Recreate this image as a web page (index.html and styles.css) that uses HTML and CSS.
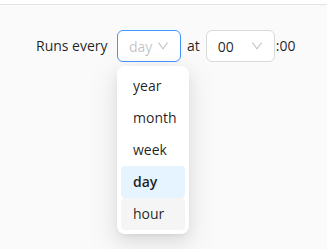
FILE: index.html
```html
<!DOCTYPE html>
<html>
<head>
  <title>Schedule</title>
  <link rel="stylesheet" href="styles.css">
</head>
<body>
  <div class="topbar"></div>
  <div class="schedule">
    <span class="label label-runs">Runs every</span>
    <div class="select-wrap">
      <div class="select select-focused">
        <span class="placeholder">day</span>
        <svg class="arrow" viewBox="64 64 896 896" width="12" height="12" fill="currentColor"><path d="M884 256h-75c-5.1 0-9.9 2.5-12.9 6.6L512 654.2 227.9 262.6c-3-4.1-7.8-6.6-12.9-6.6h-75c-6.5 0-10.3 7.4-6.5 12.7l352.6 486.1c12.8 17.6 39 17.6 51.7 0l352.6-486.1c3.9-5.3.1-12.7-6.4-12.7z"/></svg>
      </div>
      <div class="dropdown">
        <div class="option">year</div>
        <div class="option">month</div>
        <div class="option">week</div>
        <div class="option option-selected">day</div>
        <div class="option option-active">hour</div>
      </div>
    </div>
    <span class="label label-at">at</span>
    <div class="select select-hour">
      <span class="value">00</span>
      <svg class="arrow" viewBox="64 64 896 896" width="12" height="12" fill="currentColor"><path d="M884 256h-75c-5.1 0-9.9 2.5-12.9 6.6L512 654.2 227.9 262.6c-3-4.1-7.8-6.6-12.9-6.6h-75c-6.5 0-10.3 7.4-6.5 12.7l352.6 486.1c12.8 17.6 39 17.6 51.7 0l352.6-486.1c3.9-5.3.1-12.7-6.4-12.7z"/></svg>
    </div>
    <span class="label label-end">:00</span>
  </div>
</body>
</html>
```

FILE: styles.css
```css
body {
  margin: 0;
  height: 100vh;
  background-color: #fafafa;
  font-family: "Open Sans", sans-serif;
  font-size: 14px;
  color: rgba(0, 0, 0, 0.88);
}

.topbar {
  height: 4px;
  background-color: #fff;
  border-bottom: 1px solid #e3e3e3;
}

.schedule {
  display: flex;
  align-items: center;
  padding: 25px 0 0 36px;
}

.label {
  line-height: 22px;
}

.label-runs {
  width: 75px;
}

.label-at {
  margin: 0 6px;
}

.label-end {
  margin-left: 1px;
}

.select-wrap {
  position: relative;
  margin-left: 6px;
}

.select {
  box-sizing: border-box;
  display: flex;
  align-items: center;
  justify-content: space-between;
  height: 32px;
  padding: 0 11px;
  background-color: #fff;
  border: 1px solid #d9d9d9;
  border-radius: 6px;
}

.select-focused {
  width: 64px;
  border-color: #4096ff;
}

.select-hour {
  width: 69px;
}

.select .placeholder {
  color: rgba(0, 0, 0, 0.25);
}

.select .arrow {
  color: rgba(0, 0, 0, 0.25);
}

.dropdown {
  position: absolute;
  top: 36px;
  left: 0;
  width: 72px;
  box-sizing: border-box;
  padding: 4px;
  background-color: #fff;
  border-radius: 8px;
  box-shadow: 0 6px 16px 0 rgba(0, 0, 0, 0.08), 0 3px 6px -4px rgba(0, 0, 0, 0.12), 0 9px 28px 8px rgba(0, 0, 0, 0.05);
}

.option {
  padding: 5px 12px;
  line-height: 22px;
  border-radius: 4px;
}

.option-selected {
  background-color: #e6f4ff;
  font-weight: 600;
}

.option-active {
  background-color: #f5f5f5;
}
```
